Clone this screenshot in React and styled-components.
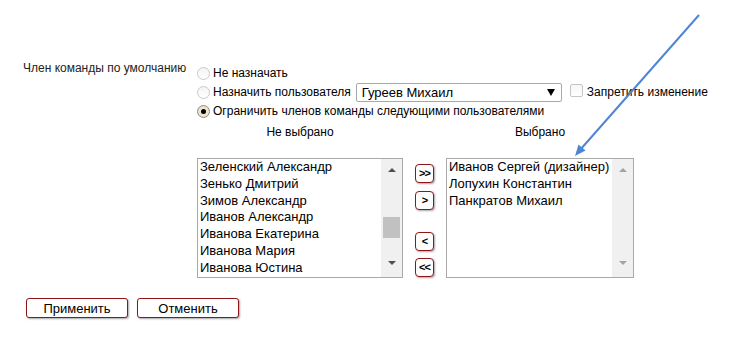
import React from 'react';
import styled, { createGlobalStyle } from 'styled-components';

const GlobalStyle = createGlobalStyle`
  html, body {
    margin: 0;
    padding: 0;
    background: #fff;
  }
  body {
    font-family: "Liberation Sans", Arial, sans-serif;
    font-size: 12px;
    color: #000;
  }
`;

let Page = styled.div`
  position: relative;
  width: 737px;
  height: 339px;
  box-sizing: border-box;
  padding: 61px 0 0 23px;
  overflow: hidden;
`;

let Form = styled.div`
  display: flex;
`;

let FieldLabel = styled.div`
  width: 174px;
  line-height: 15px;
  color: #222;
`;

let Options = styled.div`
  display: flex;
  flex-direction: column;
  padding-top: 3px;
`;

let RadioRow = styled.div`
  display: flex;
  align-items: center;
  height: 19px;
  line-height: 15px;
`;

let Radio = styled.span`
  position: relative;
  width: 11px;
  height: 11px;
  margin-right: 3px;
  border-radius: 50%;
  border: 1px solid ${(p) => (p.checked ? '#8c8c8c' : '#c9c9c9')};
  background: ${(p) =>
    p.checked
      ? 'radial-gradient(circle, #f6ecd6 0%, #e8dcc0 100%)'
      : 'linear-gradient(#f4f4f4, #ffffff)'};

  &::after {
    content: '';
    display: ${(p) => (p.checked ? 'block' : 'none')};
    position: absolute;
    left: 3px;
    top: 3px;
    width: 5px;
    height: 5px;
    border-radius: 50%;
    background: #000;
  }
`;

let Select = styled.div`
  display: flex;
  align-items: center;
  justify-content: space-between;
  box-sizing: border-box;
  width: 206px;
  height: 19px;
  margin-left: 5px;
  padding: 0 6px 0 5px;
  border: 1px solid #a9a9a9;
  border-radius: 2px;
  background: #fff;
  font-size: 13px;
`;

let SelectCaret = styled.span`
  width: 0;
  height: 0;
  border-left: 4px solid transparent;
  border-right: 4px solid transparent;
  border-top: 7px solid #000;
`;

let Checkbox = styled.span`
  box-sizing: border-box;
  width: 13px;
  height: 13px;
  margin: -4px 4px 0 8px;
  border: 1px solid #c6c6c6;
  border-radius: 2px;
  background: linear-gradient(#f6f6f6, #ffffff);
`;

let Transfer = styled.div`
  display: grid;
  grid-template-columns: 206px 43px 188px;
  grid-template-rows: 15px 120px;
  row-gap: 18px;
  margin-top: 4px;
`;

let ListTitle = styled.div`
  line-height: 15px;
  text-align: center;
  grid-column: ${(p) => p.col};
`;

let ListBox = styled.div`
  display: flex;
  box-sizing: border-box;
  height: 120px;
  border: 1px solid #a9a9a9;
  background: #fff;
  overflow: hidden;
  font-size: 13px;
`;

let Items = styled.div`
  flex: 1;
  padding-left: 2px;
  overflow: hidden;
`;

let Item = styled.div`
  height: 16.8px;
  line-height: 16.8px;
  white-space: nowrap;
`;

let ScrollBar = styled.div`
  display: flex;
  flex-direction: column;
  width: 21px;
  background: #f0f0f0;
`;

let ScrollArrow = styled.div`
  display: flex;
  justify-content: center;
  align-items: center;
  height: ${(p) => p.h}px;

  &::before {
    content: '';
    width: 0;
    height: 0;
    border-left: 4px solid transparent;
    border-right: 4px solid transparent;
    ${(p) => (p.down ? 'border-top' : 'border-bottom')}: 4px solid
      ${(p) => (p.disabled ? '#a3a3a3' : '#505050')};
  }
`;

let ScrollTrack = styled.div`
  flex: 1;
  display: flex;
  flex-direction: column;
  align-items: center;
`;

let ScrollThumb = styled.div`
  width: 17px;
  height: 21px;
  background: #c1c1c1;
`;

let MoveButtons = styled.div`
  display: flex;
  flex-direction: column;
  align-items: center;
  padding-top: 6px;
`;

let MoveButton = styled.button`
  box-sizing: border-box;
  width: 19px;
  height: 19px;
  margin-top: ${(p) => p.gap || 0}px;
  padding: 0;
  border: 1px solid #8e1616;
  border-radius: 4px;
  background: #fff;
  box-shadow: 1px 1px 2px rgba(0, 0, 0, 0.35);
  font-family: "Liberation Sans", Arial, sans-serif;
  font-size: 11px;
  font-weight: bold;
  letter-spacing: -1px;
  color: #000;
  line-height: 15px;
`;

let Actions = styled.div`
  display: flex;
  gap: 9px;
  margin-top: 20px;
  padding-left: 3px;
`;

let ActionButton = styled.button`
  box-sizing: border-box;
  width: 102px;
  height: 20px;
  padding: 0;
  border: 1px solid #8e1616;
  border-radius: 3px;
  background: #fff;
  box-shadow: 1px 1px 2px rgba(0, 0, 0, 0.35);
  font-family: "Liberation Sans", Arial, sans-serif;
  font-size: 13px;
  color: #000;
`;

let Pointer = styled.svg`
  position: absolute;
  left: 0;
  top: 0;
  pointer-events: none;
`;

const notSelected = [
  'Зеленский Александр',
  'Зенько Дмитрий',
  'Зимов Александр',
  'Иванов Александр',
  'Иванова Екатерина',
  'Иванова Мария',
  'Иванова Юстина',
];

const selected = [
  'Иванов Сергей (дизайнер)',
  'Лопухин Константин',
  'Панкратов Михаил',
];

function List({ items, thumbOffset, disabled }) {
  return (
    <ListBox>
      <Items>
        {items.map((name) => (
          <Item key={name}>{name}</Item>
        ))}
      </Items>
      <ScrollBar>
        <ScrollArrow h={22} disabled={disabled} />
        <ScrollTrack>
          {!disabled && <ScrollThumb style={{ marginTop: thumbOffset }} />}
        </ScrollTrack>
        <ScrollArrow h={28} down disabled={disabled} />
      </ScrollBar>
    </ListBox>
  );
}

export default function App() {
  return (
    <>
      <GlobalStyle />
      <Page>
        <Form>
          <FieldLabel>Член команды по умолчанию</FieldLabel>
          <Options>
            <RadioRow>
              <Radio />
              Не назначать
            </RadioRow>
            <RadioRow>
              <Radio />
              Назначить пользователя
              <Select>
                Гуреев Михаил
                <SelectCaret />
              </Select>
              <Checkbox />
              Запретить изменение
            </RadioRow>
            <RadioRow>
              <Radio checked />
              Ограничить членов команды следующими пользователями
            </RadioRow>
            <Transfer>
              <ListTitle col={1}>Не выбрано</ListTitle>
              <ListTitle col={3}>Выбрано</ListTitle>
              <List items={notSelected} thumbOffset={36} />
              <MoveButtons>
                <MoveButton>&gt;&gt;</MoveButton>
                <MoveButton gap={8}>&gt;</MoveButton>
                <MoveButton gap={22}>&lt;</MoveButton>
                <MoveButton gap={7}>&lt;&lt;</MoveButton>
              </MoveButtons>
              <List items={selected} disabled />
            </Transfer>
          </Options>
        </Form>
        <Actions>
          <ActionButton>Применить</ActionButton>
          <ActionButton>Отменить</ActionButton>
        </Actions>
        <Pointer width="737" height="339">
          <line x1="699" y1="15" x2="580" y2="150" stroke="#4f86d4" strokeWidth="2" />
          <polygon points="575,156 585.5,150.5 578.5,144.5" fill="#4f86d4" />
        </Pointer>
      </Page>
    </>
  );
}
